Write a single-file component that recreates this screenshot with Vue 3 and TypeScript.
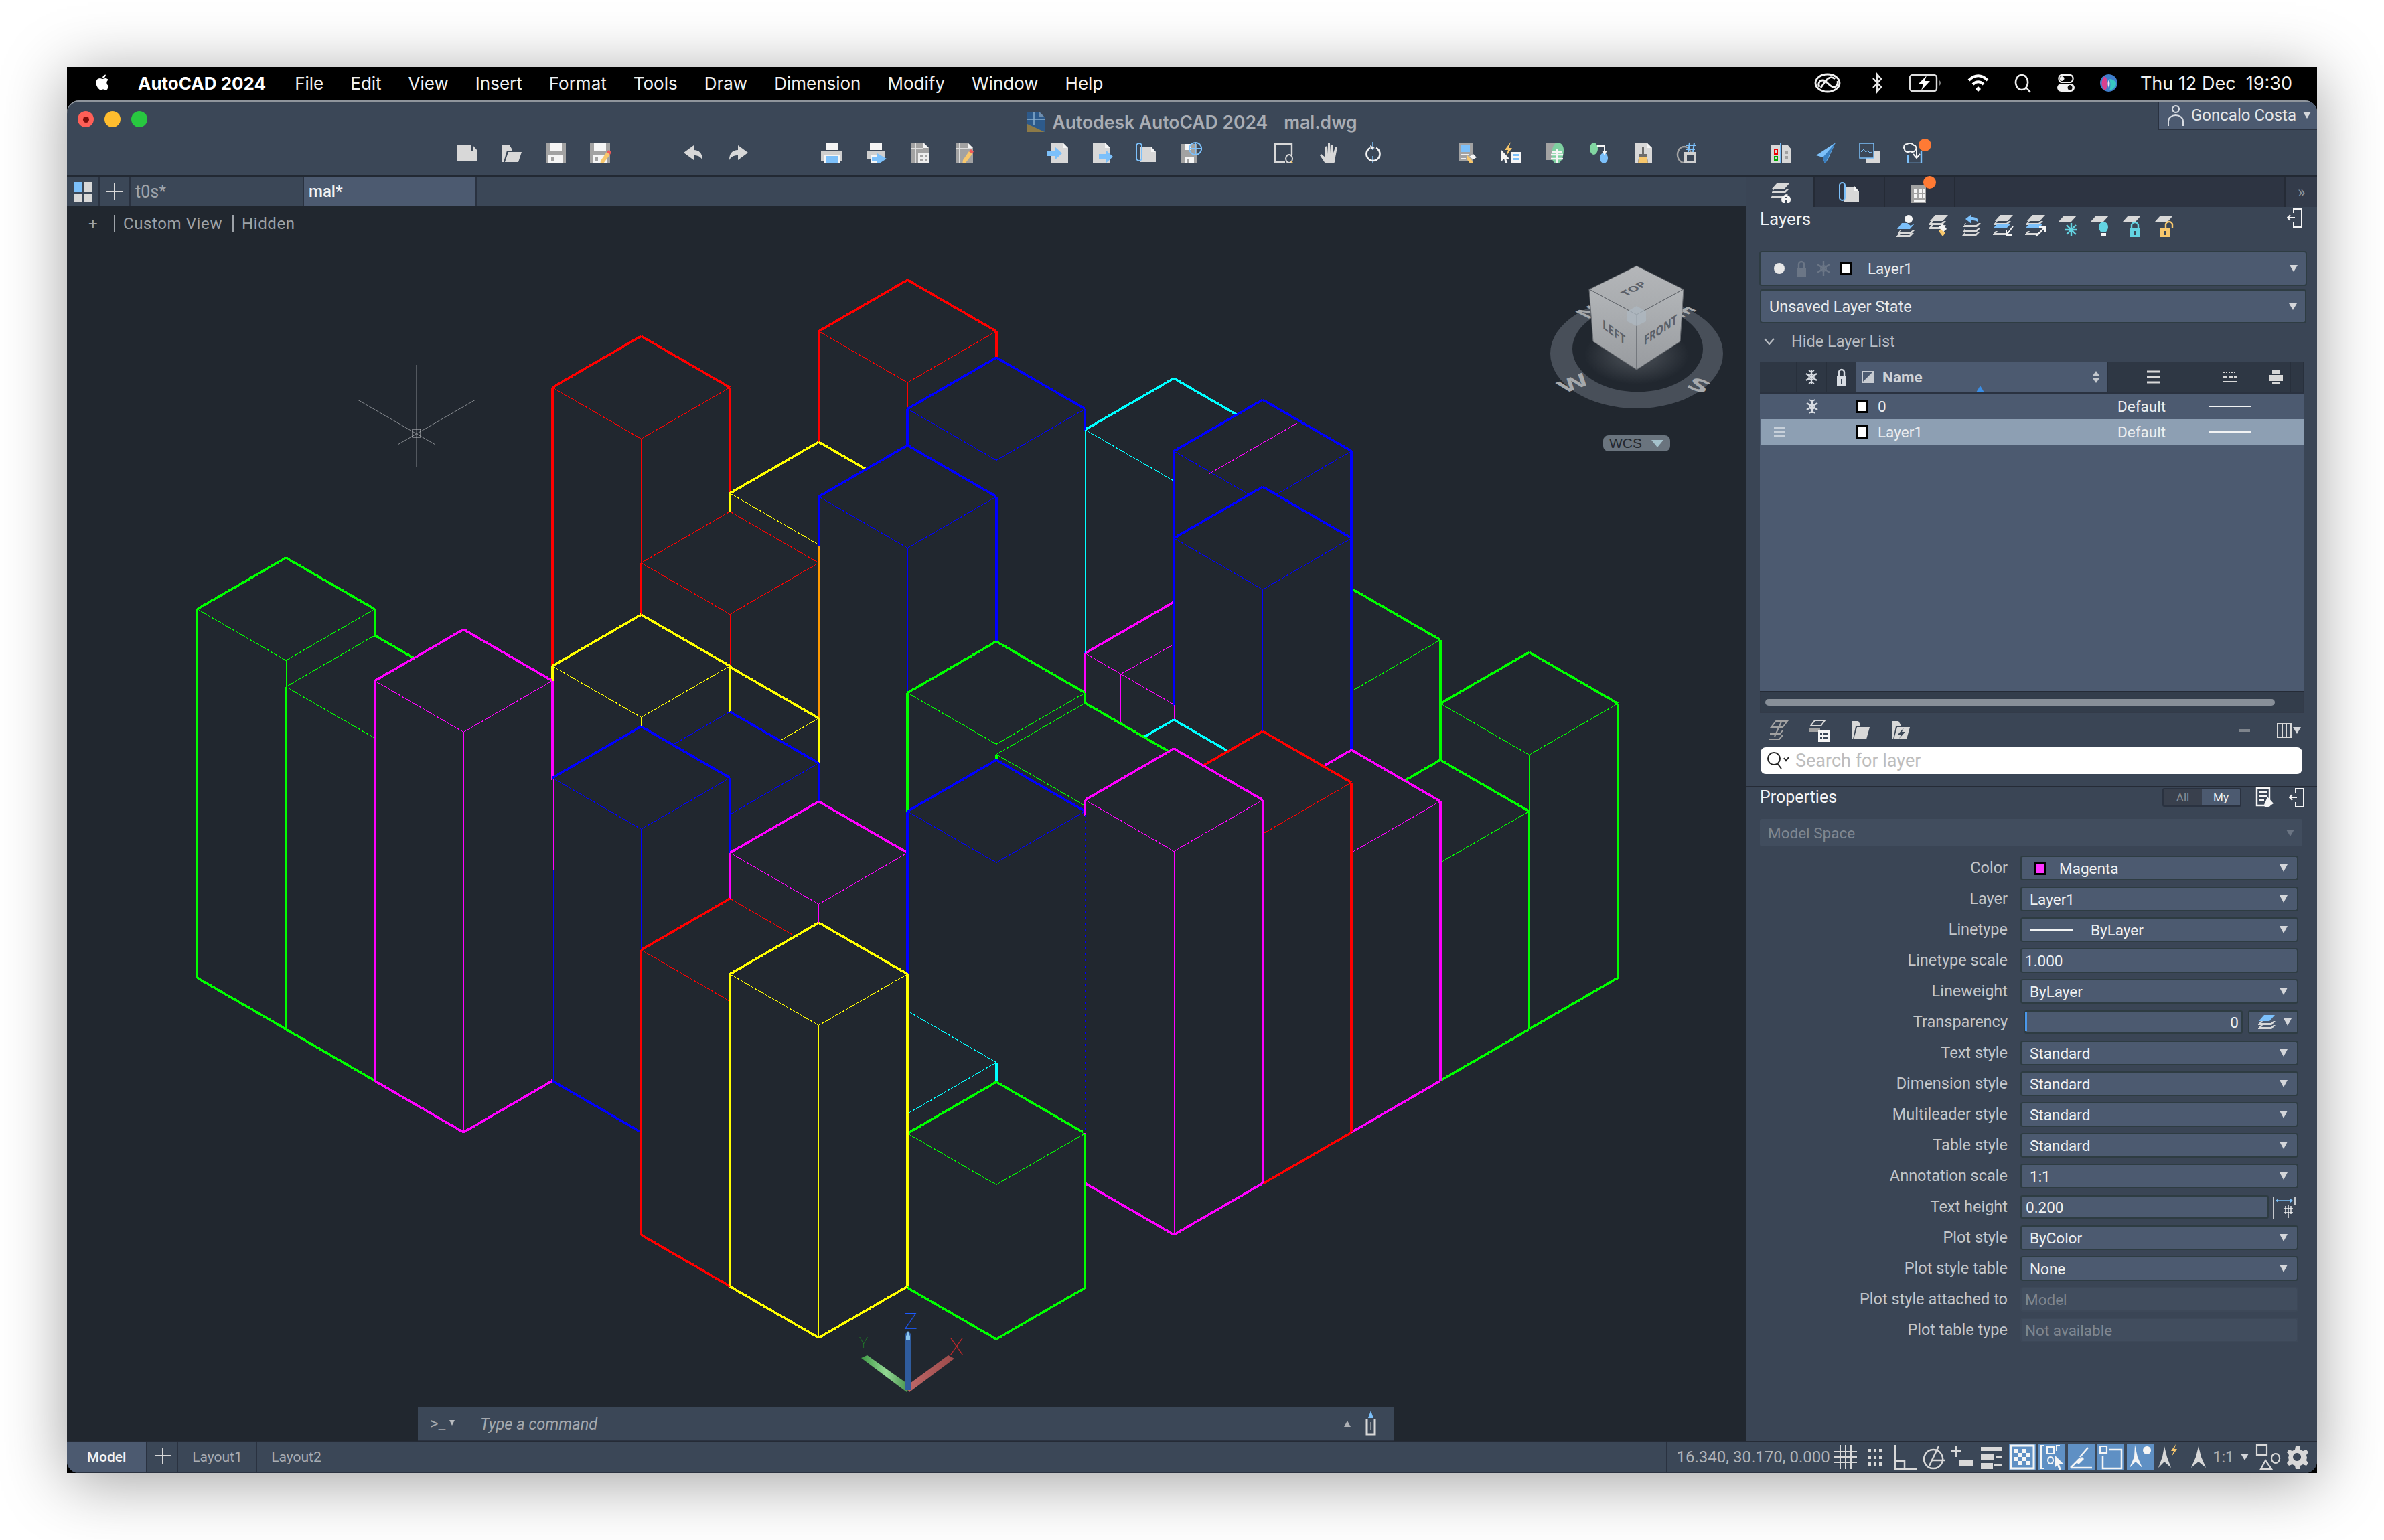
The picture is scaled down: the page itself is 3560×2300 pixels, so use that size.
<template>
  <div class="window">
    <div class="menubar">
      <Ico n="apple" :w="30" :h="34" class="apple" />
      <span class="app-name">AutoCAD 2024</span>
      <span v-for="m in menus" :key="m" class="menu-item">{{ m }}</span>
      <div class="tray">
        <Ico n="cc" :w="40" :h="30" />
        <Ico n="bt" :w="20" :h="32" class="bt" />
        <Ico n="batt" :w="52" :h="30" />
        <Ico n="wifi" :w="34" :h="28" />
        <Ico n="search" :w="28" :h="30" />
        <Ico n="ctrl" :w="28" :h="30" />
        <Ico n="siri" :w="28" :h="30" />
        <span class="clock">Thu 12 Dec&nbsp; 19:30</span>
      </div>
    </div>

    <div class="app">
      <div class="titlebar">
        <div class="title-top">
          <div class="lights">
            <i class="light red"><b></b></i>
            <i class="light yellow"></i>
            <i class="light green"></i>
          </div>
          <div class="title">
            <Ico n="dwg" :w="28" :h="32" />
            <span>Autodesk AutoCAD 2024</span>
            <span class="title-file">mal.dwg</span>
          </div>
          <div class="user">
            <Ico n="person" :w="26" :h="34" />
            <span>Goncalo Costa</span>
            <i class="caret"></i>
          </div>
        </div>
        <div class="tools">
          <div v-for="(g, i) in toolGroups" :key="i" class="tool-group">
            <Ico v-for="t in g" :key="t" :n="t" />
            <i v-if="i === toolGroups.length - 1" class="badge tool-badge"></i>
          </div>
        </div>
      </div>

      <div class="body">
        <div class="left">
          <div class="docbar">
            <div class="doc-btn first"><Ico n="start" :w="30" :h="30" /></div>
            <div class="doc-btn plus"><Ico n="plus" :w="26" :h="26" /></div>
            <div class="doc-tab">t0s*</div>
            <div class="doc-tab active">mal*</div>
          </div>

          <div class="viewport">
            <svg class="scene" viewBox="100 308 2507 1844">
              <path
                v-for="(p, i) in scene"
                :key="i"
                :d="p.d"
                :fill="p.fill ?? 'none'"
                :stroke="p.stroke ?? 'none'"
                :stroke-width="p.width ?? 1"
                :stroke-dasharray="p.dash"
                stroke-linejoin="miter"
                shape-rendering="crispEdges"
              />
              <g stroke="#878b90" stroke-width="1" fill="none">
                <path d="M622 545V698M534 597L650 664M710 597L594 664" />
                <rect x="616" y="641" width="12" height="12" stroke="#c4c6c9" />
              </g>
              <!-- ucs -->
              <defs>
                <linearGradient id="ug" x1="0" y1="0" x2="1" y2="0">
                  <stop offset="0" stop-color="#3f9a45" />
                  <stop offset="0.5" stop-color="#93d894" />
                  <stop offset="1" stop-color="#3f8a45" />
                </linearGradient>
                <linearGradient id="ur" x1="0" y1="0" x2="1" y2="0">
                  <stop offset="0" stop-color="#c06a6a" />
                  <stop offset="1" stop-color="#9c4a4a" />
                </linearGradient>
              </defs>
              <path d="M1286 2028L1295 2024L1360 2070L1354 2079Z" fill="url(#ug)" />
              <path d="M1416 2024L1425 2029L1358 2079L1352 2071Z" fill="url(#ur)" />
              <path d="M1352 1992L1356 1988L1360 1992V2076H1352Z" fill="#2f5c9e" />
              <path d="M1353 1996L1356 1988L1359 1996V2002H1353Z" fill="#8cc6ee" />
              <text class="axis" x="1350" y="1985" fill="#1b5cff">Z</text>
              <text class="axis small" x="1283" y="2013" fill="#1f9b23">Y</text>
              <text class="axis" x="1418" y="2023" fill="#e22828">X</text>
            </svg>

            <div class="vp-label">
              <span class="vp-plus">+</span>
              <span class="vp-item">Custom View</span>
              <span class="vp-item">Hidden</span>
            </div>

            <svg class="cube" viewBox="0 0 400 360" width="400" height="360">
              <defs>
                <radialGradient id="glow" cx="0.5" cy="0.5" r="0.5">
                  <stop offset="0.4" stop-color="#7d8288" stop-opacity="0.3" />
                  <stop offset="1" stop-color="#7d8288" stop-opacity="0" />
                </radialGradient>
                <linearGradient id="faceL" x1="0" y1="0" x2="0" y2="1">
                  <stop offset="0" stop-color="#b2b5b8" />
                  <stop offset="1" stop-color="#989b9f" />
                </linearGradient>
                <linearGradient id="faceT" x1="0" y1="0" x2="0" y2="1">
                  <stop offset="0" stop-color="#b4b6b9" />
                  <stop offset="1" stop-color="#a7aaad" />
                </linearGradient>
              </defs>
              <path
                fill-rule="evenodd"
                fill="#484f59"
                d="M95 188a129 82 0 1 0 258 0a129 82 0 1 0 -258 0ZM128 181a97 64 0 1 0 195 0a97 64 0 1 0 -195 0Z"
              />
              <text class="compass" transform="matrix(1 -0.45 0.9 0.45 150 137)">N</text>
              <text class="compass" transform="matrix(1 0.45 -0.9 0.45 277 127)">E</text>
              <text class="compass" transform="matrix(1.3 -0.5 0.6 0.7 116 248)">W</text>
              <text class="compass" transform="matrix(1.6 0.6 -0.5 0.7 297 238)">S</text>
              <ellipse cx="224" cy="190" rx="78" ry="44" fill="url(#glow)" />
              <path d="M224 57L294 92L224 130L153 92Z" fill="url(#faceT)" stroke="#4a4f55" />
              <path d="M153 92L224 130V212L159 170Z" fill="url(#faceL)" stroke="#666a70" />
              <path d="M294 92L224 130V212L289 170Z" fill="url(#faceL)" stroke="#666a70" />
              <path d="M224 117L238 125V140L224 147L210 140V125Z" fill="#aeb8c2" opacity="0.75" />
              <text class="face" transform="matrix(0.86 -0.47 0.72 0.42 208 103)">TOP</text>
              <text class="face" transform="matrix(0.8 0.6 0 1 173 150)">LEFT</text>
              <text class="face" transform="matrix(0.76 -0.52 0 1 235 176)">FRONT</text>
            </svg>
            <div class="wcs">WCS <i class="wcs-caret"></i></div>

            <div class="cmdline">
              <span class="prompt">&gt;_ <i class="tiny-caret"></i></span>
              <span class="cmd-hint">Type a command</span>
              <i class="up-caret"></i>
              <Ico n="cmdup" :w="28" :h="38" />
            </div>
          </div>
        </div>

        <aside class="panel">
          <div class="panel-tabs">
            <div class="ptab active"><Ico n="ptabLayers" /></div>
            <div class="ptab"><Ico n="attach" /></div>
            <div class="ptab badged">
              <Ico n="ptabSheet" />
              <i class="badge"></i>
            </div>
            <div class="ptab-fill"></div>
            <div class="ptab-more">»</div>
          </div>

          <div class="layers-head">
            <span class="panel-title">Layers</span>
            <div class="layers-tools">
              <Ico v-for="t in layerTools" :key="t" :n="t" :w="32" :h="34" />
            </div>
            <Ico n="dock" :w="24" :h="30" class="dock" />
          </div>

          <div class="combo layer-combo">
            <i class="dot"></i>
            <Ico n="lockDim" :w="18" :h="24" />
            <Ico n="snowDim" :w="20" :h="24" />
            <i class="swatch"></i>
            <span class="combo-text">Layer1</span>
            <i class="caret"></i>
          </div>
          <div class="combo state-combo">
            <span>Unsaved Layer State</span>
            <i class="caret"></i>
          </div>

          <div class="hide-row">
            <svg width="18" height="12" viewBox="0 0 18 12"><path d="M2 2l7 8 7-8" fill="none" stroke="#b8bcc2" stroke-width="2.2" /></svg>
            <span>Hide Layer List</span>
          </div>

          <div class="layer-table">
            <div class="thead">
              <div class="th c-status"></div>
              <div class="th c-frz"><Ico n="snow" :w="22" :h="24" /></div>
              <div class="th c-lock"><Ico n="lock" :w="18" :h="26" /></div>
              <div class="th c-name">
                <svg width="18" height="18" viewBox="0 0 18 18"><path d="M1 1h16v16H1z" fill="none" stroke="#c8ccd2" stroke-width="2" /><path d="M1 17L17 1v16z" fill="#c8ccd2" /></svg>
                <b>Name</b>
                <span class="sort"><i></i><i class="down"></i></span>
                <i class="sort-mark"></i>
              </div>
              <div class="th c-lw"><Ico n="lines" :w="22" :h="20" /></div>
              <div class="th c-lt"><Ico n="dash" :w="22" :h="20" /></div>
              <div class="th c-pr"><Ico n="printSmall" :w="22" :h="22" /></div>
              <div class="th c-end"></div>
            </div>
            <div class="tbody">
              <div v-for="r in layerRows" :key="r.name" class="tr" :class="{ sel: r.sel }">
                <div class="c-status td">
                  <svg v-if="r.sel" width="20" height="16" viewBox="0 0 20 16"><path d="M2 2h16M2 8h16M2 14h16" stroke="#c7d0da" stroke-width="2" /></svg>
                </div>
                <div class="c-frz td"><Ico v-if="!r.sel" n="snow" :w="22" :h="24" /></div>
                <div class="c-lock td"></div>
                <div class="c-name td">
                  <i class="swatch"></i>
                  <span class="row-name">{{ r.name }}</span>
                </div>
                <div class="c-lw td">Default</div>
                <div class="c-lt td"><i class="lt-line"></i></div>
              </div>
            </div>
            <div class="hscroll"><i></i></div>
          </div>

          <div class="layer-actions">
            <Ico v-for="t in layerActions" :key="t" :n="t" :w="34" :h="34" />
            <span class="grow"></span>
            <i class="minus"></i>
            <Ico n="cols" :w="22" :h="22" />
            <i class="caret small"></i>
          </div>

          <div class="search">
            <svg width="38" height="28" viewBox="0 0 38 28"><circle cx="12" cy="11" r="9" fill="none" stroke="#222" stroke-width="2" /><path d="M17 18l6 8M27 10l3 4 4-5" fill="none" stroke="#222" stroke-width="2" /></svg>
            <span>Search for layer</span>
          </div>

          <div class="divider"></div>

          <div class="props-head">
            <span class="panel-title">Properties</span>
            <span class="grow"></span>
            <div class="seg">
              <span class="seg-all">All</span>
              <span class="seg-my">My</span>
            </div>
            <Ico n="report" :w="30" :h="30" class="report" />
            <Ico n="dock" :w="24" :h="30" />
          </div>

          <div class="space-combo">
            <span>Model Space</span>
            <i class="caret"></i>
          </div>

          <div class="prop-list">
            <div v-for="p in props" :key="p.label" class="prop">
              <label>{{ p.label }}</label>
              <div class="prop-val" :class="p.kind">
                <template v-if="p.kind === 'color'">
                  <i class="swatch magenta"></i>
                  <span class="indent">{{ p.value }}</span>
                  <i class="caret"></i>
                </template>
                <template v-else-if="p.kind === 'linetype'">
                  <i class="lt-line short"></i>
                  <span class="indent wide">{{ p.value }}</span>
                  <i class="caret"></i>
                </template>
                <template v-else-if="p.kind === 'transp'">
                  <div class="slider">
                    <i class="thumb"></i>
                    <i class="tick"></i>
                    <span>{{ p.value }}</span>
                  </div>
                  <div class="side-btn">
                    <Ico n="lay1Small" :w="28" :h="26" />
                    <i class="caret"></i>
                  </div>
                </template>
                <template v-else-if="p.kind === 'pick'">
                  <div class="inputbox">{{ p.value }}</div>
                  <Ico n="pick" :w="36" :h="36" />
                </template>
                <template v-else>
                  <span>{{ p.value }}</span>
                  <i v-if="p.kind === 'select'" class="caret"></i>
                </template>
              </div>
            </div>
          </div>
        </aside>
      </div>

      <div class="statusbar">
        <div class="stab model">Model</div>
        <div class="stab add"><Ico n="plus" :w="26" :h="30" /></div>
        <div class="stab">Layout1</div>
        <div class="stab">Layout2</div>
        <span class="grow"></span>
        <div class="coords">16.340, 30.170, 0.000</div>
        <div class="status-icons">
          <div v-for="s in statusIcons" :key="s.n" class="sico" :class="{ on: s.on }">
            <Ico :n="s.n" :w="40" :h="40" />
          </div>
          <span class="anno">1:1</span>
          <i class="caret"></i>
          <div class="sico last"><Ico n="units" :w="40" :h="40" /></div>
          <div class="sico"><Ico n="gear" :w="40" :h="40" /></div>
        </div>
      </div>
    </div>
  </div>
</template>

<script setup lang="ts">
import { h } from 'vue';

type P = [string, string, number?];

const GRAY = '#d8d8d8';
const MID = '#a2a2a2';
const BLUE = '#7cc0fa';
const ORANGE = '#f7c76c';
const WHITE = '#f5f5f5';
const DARK = '#3b4757';

const plate = (y: number, x = 0) => `M${11 + x} ${y}h19l-8 9H${3 + x}z`;
const plateLine = (y: number, x = 0) => `M${5 + x} ${y}l-4 5v1h20l6-6h-3l-4 3H6l2-3z`;

const pencil = (x: number, y: number): P[] => [
  [ORANGE, `M${x + 9} ${y}l5 4-10 13-5 3 1-7z`],
  ['#ef5b5b', `M${x + 9} ${y}l3-3 4 3-2 4z`],
];

const floppy: P[] = [
  [MID, 'M2 1h30v30H2z'],
  [WHITE, 'M8 1h18v12H8z'],
  [WHITE, 'M6 19h22v12H6z'],
  [MID, 'M10 22h4v7h-4z'],
];

const I: Record<string, P[]> = {
  apple: [['#fff', 'M22.2 26.5c-1.2 1.2-2.6 1-3.9.4-1.4-.6-2.7-.6-4.1 0-1.8.8-2.8.6-3.9-.4C3.3 20 4.2 10.300 11.200 10c1.700.1 2.900.9 3.900 1 1.500-.3 2.900-1.200 4.500-1.100 1.900.2 3.400.9 4.300 2.300-3.900 2.400-3 7.600.6 9-.7 1.900-1.700 3.800-2.300 5.300zM15.100 9.900c-.2-2.800 2.100-5.200 4.700-5.400.4 3.300-3 5.700-4.700 5.400z']],
  cc: [
    ['#f0f0f0', 'M20 2c10 0 18 6 18 13s-8 13-18 13S2 22 2 15 10 2 20 2z', 2.8],
    ['#f0f0f0', 'M8 21c-3-5 0-10 5-10 6 0 10 10 16 10 5 0 7-5 6-9M31 9c-4-4-9-3-14 3l-7 10', 2.8],
  ],
  bt: [['#e8e8e8', 'M4 9l12 13-6 7V3l6 7L4 23', 2.4]],
  batt: [['#ddd', 'M7 3h32a4 4 0 0 1 4 4v16a4 4 0 0 1-4 4H7a4 4 0 0 1-4-4V7a4 4 0 0 1 4-4z', 2.4], ['#fff', 'M28 4L15 17h8l-3 9 13-14h-8z'], ['#777', 'M46 11v8c2 0 3-2 3-4s-1-4-3-4z']],
  wifi: [['#fff', 'M3 10C12 1 22 1 31 10', 4], ['#fff', 'M9 16c5-5 11-5 16 0', 4], ['#fff', 'M17 19l4 4-4 4-4-4z']],
  search: [['#eee', 'M12 3a9 11 0 1 0 .1 0zM18 21l7 8', 2.6]],
  ctrl: [['#f2f2f2', 'M7 3h14a6 6 0 0 1 0 11H7a6 6 0 0 1 0-11z', 2.2], ['#f2f2f2', 'M8 5a3.500 3.500 0 1 0 .1 0z'], ['#f2f2f2', 'M7 16h14a6 6 0 0 1 0 12H7a6 6 0 0 1 0-12z'], ['#111', 'M20 18a3.500 4 0 1 0 .1 0z']],
  siri: [['#3f7ecb', 'M14 2a13 13 0 1 1-.1 0z'], ['#d8418f', 'M8 5c-6 5-6 15 0 21 6-4 6-16 0-21z'], ['#37c8c0', 'M15 9c4 0 10 3 10 7s-6 10-10 10c2-5 2-12 0-17z'], ['#e8e8f0', 'M14 10c2 4 2 8 0 12-2-4-2-8 0-12z']],
  dwg: [['#2d5a8b', 'M1 1h18l8 8v22H1z'], ['#8d7a47', 'M1 19l26 12H1z'], ['#6f8eae', 'M19 1l8 8h-8z'], ['#8bb0cf', 'M1 12h26M11 1v20', 1.5]],
  person: [['#d8dce2', 'M13 3a5 5 0 1 0 .1 0zM2 33V26c0-5 5-9 11-9s11 4 11 9v7', 2]],
  start: [[BLUE, 'M1 1h13v15H1z'], [GRAY, 'M16 1h13v15H16zM1 18h13v12H1zM16 18h13v12H16z']],
  plus: [[GRAY, 'M13 1v24M1 13h24', 2]],
  new: [[GRAY, 'M2 5h21v9h9v15H2z'], [GRAY, 'M25 5l7 8h-7z']],
  open: [[GRAY, 'M3 5h11l3 5v3h-7L5 30H3z'], [GRAY, 'M12 15h20l-5 15H7z']],
  save: floppy,
  saveas: [...floppy, ...pencil(18, 15)],
  undo: [[GRAY, 'M17 5L2 16l15 11v-7c5 0 10 1 13 7 0-10-5-15-13-15z']],
  redo: [[GRAY, 'M17 5l15 11-15 11v-7c-5 0-10 1-13 7 0-10 5-15 13-15z']],
  print: [[WHITE, 'M8 1h18v11H8z'], ['#cfcfcf', 'M1 14h32v15H1z'], [WHITE, 'M5 19h24v13H5z'], [BLUE, 'M8 21h18v10H8z']],
  plot: [[WHITE, 'M8 1h18v11H8z'], ['#cfcfcf', 'M3 14h28v11H3z'], [WHITE, 'M9 20h14v12H9z'], [BLUE, 'M19 17l14 8-14 9v-5h-8v-7h8z']],
  sheet: [[MID, 'M4 1h18l8 8v22H4z'], [WHITE, 'M22 1l8 8h-8z'], ['#ddd', 'M10 1v30M4 10h18', 2], ['#eee', 'M14 16h16v16H14z'], [MID, 'M17 19h4v3h-4zM24 19h4v3h-4zM17 25h4v3h-4zM24 25h4v3h-4z']],
  sheetEdit: [[MID, 'M4 1h18l8 8v22H4z'], [WHITE, 'M22 1l8 8h-8z'], ['#ddd', 'M10 1v30M4 10h24', 2], ...pencil(15, 14)],
  import: [[GRAY, 'M6 1h18l8 8v23H6z'], [WHITE, 'M24 1l8 8h-8z'], [BLUE, 'M12 7l11 10-11 10v-6H1v-8h11z']],
  export: [[GRAY, 'M3 1h18l8 8v23H3z'], [WHITE, 'M21 1l8 8h-8z'], [BLUE, 'M22 12l11 10-11 10v-6H12v-8h10z']],
  attach: [[GRAY, 'M8 8h16l7 7v15H8z'], [WHITE, 'M24 7l7 8h-7z'], [BLUE, 'M10 7v17a4 4 0 0 1-8 0V6a4 4 0 0 1 8 0v15', 2]],
  web: [[MID, 'M3 3h24v29H3z'], [WHITE, 'M8 22h14v10H8z'], [MID, 'M11 25h3v6h-3z'], [WHITE, 'M8 3h10v9H8z'], [BLUE, 'M24 1a9 9 0 1 0 .1 0zM24 1v18M15 10h18', 2]],
  zoomwin: [[GRAY, 'M3 3h25v27H3z', 2.4], [DARK, 'M18 20h16v13H18z'], [GRAY, 'M24 19a5 6 0 1 0 .1 0z', 2], [ORANGE, 'M27 29l4 5', 2]],
  hand: [[GRAY, 'M12 32L4 20l2-2 6 5V7l3-1 1 12V2h3l1 15 1-13h3l-1 15 4-11h3l-3 15-1 7-4 6z']],
  orbit: [[BLUE, 'M17 0v12M17 21v11', 1.5], [WHITE, 'M22 9a10 10 0 1 1-9 0', 2.6], [WHITE, 'M13 5l1 6 6-2z']],
  props: [[MID, 'M5 1h22v28H5z'], [BLUE, 'M8 4h14v11H8z'], ['#eee', 'M8 19h12M8 25h8', 2], [ORANGE, 'M18 20l6 6 4 7-6-1-5-7z'], [WHITE, 'M21 22l6-4 5 5-5 3z']],
  qprops: [[ORANGE, 'M17 0l-9 12h5l-3 9 9-12h-5z'], [WHITE, 'M2 11l14 15-6-1 3 8-4-1-2-7-5 5z'], [WHITE, 'M18 15h15v17H18z'], [BLUE, 'M21 18h9v3h-9zM21 24h9v3h-9z']],
  match: [[MID, 'M4 1h20v26H4z'], ['#7ed0a0', 'M21 1c6 0 9 5 9 11 0 9-3 19-9 20-8 2-11-12-8-21 1-5 4-10 8-10z'], [WHITE, 'M20 10v22M11 19h18M11 25h18M13 15h14', 2.4]],
  qselect: [['#82d6a2', 'M9 1c3 0 6 4 6 9s-3 9-6 9-6-4-6-9 3-9 6-9z'], [BLUE, 'M24 16c3 0 6 4 6 8s-3 8-6 8-6-4-6-8 3-8 6-8z'], [WHITE, 'M14 6h11v9', 2], [WHITE, 'M21 13h8l-4 7z']],
  purge: [[GRAY, 'M4 1h18l8 8v22H4z'], [WHITE, 'M22 1l8 8h-8z'], ['#6d6d6d', 'M15 7h3v12h-3z'], ['#6d6d6d', 'M11 18h11l2 13H9z'], [ORANGE, 'M11 22h11l2 10H9z']],
  qcalc: [[MID, 'M12 7a10 12 0 1 0 .1 0z', 2.4], [BLUE, 'M20 1l-2 14M27 1l-2 14M15 5h14M14 11h14', 2], ['#d0d0d0', 'M12 15h18v17H12z'], [DARK, 'M16 19h10v9H16z']],
  compare: [[GRAY, 'M2 5h13v27H2zM18 5h9l5 6v21H18z'], ['#e00', 'M6 10h6v9H6z'], [GRAY, 'M8 12h2v5H8z'], ['#0a0', 'M6 21h6v7H6z'], [GRAY, 'M8 23h2v3H8z'], [MID, 'M22 13h5v5h-5zM22 21h5v5h-5z'], [BLUE, 'M16 1v32', 2]],
  share: [[BLUE, 'M32 1L3 20l10 3 3 10 5-8z'], ['#3a7fc0', 'M32 1L13 23l3 10z']],
  trace: [[GRAY, 'M11 14h21v18H11z'], [DARK, 'M2 2h21v22H2z'], [BLUE, 'M2 2h21v22H2z', 1.5], [BLUE, 'M4 15l4-4 3 4 3-2 3 3 4-1', 1]],
  cloud: [[WHITE, 'M7 3c-5 0-6 5-4 8 0 4 6 5 8 3 3 2 7 1 8-2 3-2 1-7-2-7-2-3-7-4-10-2z', 2], [BLUE, 'M8 19v13h20V14', 2.4], [WHITE, 'M21 8v15M16 18l5 6 5-6', 2]],
  ptabLayers: [[GRAY, plate(2, 2)], [GRAY, plateLine(11, 4)], [GRAY, plateLine(18, 3)], [WHITE, 'M26 20a7 7 0 1 0 .1 0z'], [DARK, 'M25 23h2v2h-2zM25 27h2v6h-2z']],
  ptabSheet: [[MID, 'M4 5h22v27H4z'], [WHITE, 'M8 12h5v5H8zM15 12h5v5h-5zM8 19h5v5H8zM15 19h5v5h-5zM22 12h3v5h-3zM22 19h3v5h-3z'], [WHITE, 'M8 27h17v3H8z']],
  lay1: [[WHITE, 'M19 1a6 6 0 1 0 .1 0z'], [BLUE, 'M9 13h8l5 4 6-3-7 8H2z'], [GRAY, plateLine(23, 2)], [GRAY, plateLine(28, 0)]],
  lay2: [[GRAY, plate(1, 0)], [GRAY, plateLine(10, 0)], [GRAY, plateLine(16, 0)], [ORANGE, 'M20 21l6 7-4 5-6-8z'], [WHITE, 'M16 19l6-5 6 8-5 4z']],
  lay3: [[BLUE, 'M8 7L17 0v4c6 0 11 2 10 8-3-3-6-3-10-3v5z'], [GRAY, plateLine(13, 4)], [GRAY, plateLine(20, 4)], [GRAY, plateLine(27, 2)]],
  lay4: [[GRAY, plate(1, 1)], [GRAY, plateLine(10, 1)], [BLUE, 'M7 15h20l-6 6H1z'], [GRAY, plateLine(25, 0)], [WHITE, 'M31 18L21 31M21 23v8h8', 2]],
  lay5: [[GRAY, plate(1, 1)], [GRAY, plateLine(10, 1)], [BLUE, 'M7 15h20l-6 6H1z'], [GRAY, plateLine(25, 0)], [WHITE, 'M17 33l13-13M22 19h9v8', 2]],
  lay6: [[GRAY, plate(2, 0)], ['#63d3e2', 'M22 13v20M13 23h18M15 16l14 14M29 16L15 30', 2.4]],
  lay7: [[GRAY, plate(2, 0)], ['#63d3e2', 'M22 11a7 8 0 0 1 7 8c0 4-3 6-3 8h-8c0-2-3-4-3-8a7 8 0 0 1 7-8z'], [WHITE, 'M18 28h8v5h-8z']],
  lay8: [[GRAY, plate(2, 0)], ['#63d3e2', 'M13 21h16v13H13z'], ['#63d3e2', 'M16 21v-4a5 5 0 0 1 10 0v4', 2.4], [DARK, 'M20 25h2v6h-2z']],
  lay9: [[GRAY, plate(2, 0)], [ORANGE, 'M10 21h15v13H10z'], [ORANGE, 'M19 21v-5a5 5 0 0 1 10 0v4', 2.4], [DARK, 'M17 25h2v6h-2z']],
  lay1Small: [[BLUE, 'M10 2h16l-8 9H2z'], [GRAY, plateLine(11, 0)], [GRAY, plateLine(17, 0)]],
  dock: [[WHITE, 'M10 8V2h12v27H10v-7', 2], [WHITE, 'M1 15h11M5 11l-4 4 4 4', 2]],
  lockDim: [['#6b7686', 'M2 11h14v13H2z'], ['#6b7686', 'M5 11V6a4 4 0 0 1 8 0v5', 2.4]],
  snowDim: [['#6b7686', 'M10 1v22M1 6l18 12M19 6L1 18', 2.4], ['#6b7686', 'M10 8a4 4 0 1 0 .1 0z', 2]],
  snow: [['#d8dce2', 'M11 2v20M3 7l16 10M19 7L3 17', 2.4], ['#d8dce2', 'M11 8a4 4 0 1 0 .1 0zM7 2l4 3 4-3M7 22l4-3 4 3', 1.6]],
  lock: [['#d8dce2', 'M2 12h14v14H2z'], ['#d8dce2', 'M5 12V6a4 4 0 0 1 8 0v6', 2.4], ['#3b4757', 'M8 16h2v7H8z']],
  lines: [[GRAY, 'M1 2h20M1 10h20M1 18h20', 3]],
  dash: [[GRAY, 'M1 3h2M5 3h2M9 3h2M13 3h2M17 3h2M21 3h1M1 10h6M9 10h6M17 10h5M1 17h21', 2]],
  printSmall: [[GRAY, 'M5 1h12v6H5zM1 8h20v9H1zM5 19h12v2H5z']],
  layerAct1: [[MID, 'M12 3h17l-7 9H5z', 2], [MID, 'M3 22h15l4-5M2 30h15l5-6', 2], [MID, 'M20 4L10 26', 2]],
  layerAct2: [[GRAY, 'M10 2h15l-6 8H4z', 2], [MID, 'M2 14h16v5H2z'], [MID, 'M6 21h8'], [WHITE, 'M15 16h18v18H15z'], [DARK, 'M18 20h3v3h-3zM23 20h7v3h-7zM18 26h3v3h-3zM23 26h7v3h-7z']],
  layerOpen: [[GRAY, 'M5 3h10l3 5v3h-7L7 30H5z'], [GRAY, 'M13 12h19l-5 18H8z']],
  layerBolt: [[GRAY, 'M5 3h10l3 5v3h-7L7 30H5z'], [GRAY, 'M13 12h19l-5 18H8z'], [DARK, 'M23 13l-9 10h5l-3 6 9-10h-5z']],
  cols: [[GRAY, 'M1 1h20v20H1zM8 1v20M14 1v20', 2]],
  report: [[WHITE, 'M3 1h19v26H3z', 2.4], [WHITE, 'M7 7h12M7 13h12M7 19h7', 2.4], [WHITE, 'M19 14l9 10-9 6-4-6z'], [WHITE, 'M14 24l1 6 5-1z']],
  pick: [[WHITE, 'M2 2v33M34 2v12', 1.5], [BLUE, 'M6 8h24', 1.5], [BLUE, 'M9 5L5 8l4 3zM27 5l4 3-4 3z'], [WHITE, 'M24 14v20M17 20h14M17 26h14M20 16v12M28 16v12', 1.4]],
  cmdup: [[GRAY, 'M8 13v22h12V13', 3], [GRAY, 'M14 17v12', 1], [BLUE, 'M14 0l4 11h-8z']],
  grid: [[GRAY, 'M12 2v36M20 2v36M28 2v36M3 12h34M3 20h34M3 28h34', 2]],
  dots: [[GRAY, 'M10 8h4v5h-4zM18 8h4v5h-4zM26 8h4v5h-4zM10 18h4v5h-4zM18 18h4v5h-4zM26 18h4v5h-4zM10 28h4v5h-4zM18 28h4v5h-4zM26 28h4v5h-4z']],
  ortho: [[GRAY, 'M6 2v36h32', 2.5], [GRAY, 'M6 26h14v12', 2.5]],
  polar: [[GRAY, 'M19 9a14 14 0 1 0 .1 0z', 2.5], [GRAY, 'M13 33L27 4M16 25h20', 2.5]],
  dyn: [[GRAY, 'M9 4v16M2 11h14', 2.5], [GRAY, 'M14 24h21v9H14z']],
  lwt: [[GRAY, 'M2 5h32v6H2z'], [GRAY, 'M2 16h20v9H2zM24 18h10v3H24z'], [GRAY, 'M2 29h18v9H2zM22 30h12v3H22z']],
  transp: [[WHITE, 'M3 3h34v34H3z', 3], [WHITE, 'M8 8h6v6H8zM20 8h6v6h-6zM14 14h6v6h-6zM26 14h6v6h-6zM8 20h6v6H8zM20 20h6v6h-6zM14 26h6v6h-6zM26 26h6v6h-6z']],
  selcyc: [[WHITE, 'M9 3H4v34h5M32 3h-5v8', 2], [WHITE, 'M13 5h10v10H13z', 2], [WHITE, 'M18 20a4 5 0 1 0 .1 0z', 2], [WHITE, 'M24 17l13 13-6 1 3 8-3 1-3-8-4 4z']],
  osnap: [[WHITE, 'M4 36h32', 2.5], [WHITE, 'M4 36l14-14M18 20L30 6', 2.5], [WHITE, 'M13 28l8-8 3 3-8 8z']],
  otrack: [[WHITE, 'M4 4h10v10H4z', 2.2], [WHITE, 'M18 9h18v28H8V18', 2.5]],
  annoOn: [[WHITE, 'M12 2l4 18 7 16-10-9-9 9 7-16z'], [WHITE, 'M30 4a6 6 0 1 0 .1 0z']],
  annoAuto: [[GRAY, 'M12 4l4 16 6 16-10-9-9 9 6-16z'], [ORANGE, 'M29 1l-7 10h4l-3 8 8-11h-4z']],
  annoPlain: [[GRAY, 'M19 4l4 16 7 16-11-9-11 9 7-16z']],
  units: [[GRAY, 'M4 2h15v15H4z', 2.2], [GRAY, 'M32 15a6 7 0 1 0 .1 0z', 2.2], [GRAY, 'M17 25l9 13H10z', 2.2]],
  gear: [[GRAY, 'M20 3l4 1 1 5 4 2 5-2 3 4-3 4 1 4-1 4 3 4-3 4-5-2-4 2-1 5h-6l-1-5-4-2-5 2-3-4 3-4-1-4 1-4-3-4 3-4 5 2 4-2 1-5zM20 14a6 6 0 1 0 .1 0z']],
};

const Ico = (props: { n: string; w?: number; h?: number }) => {
  const w = props.w ?? 34;
  const ht = props.h ?? 32;
  return h(
    'svg',
    { width: w, height: ht, viewBox: `0 0 ${w} ${ht}`, style: 'flex:none;display:block' },
    (I[props.n] ?? []).map(([c, d, sw]) =>
      sw === undefined
        ? h('path', { d, fill: c, 'fill-rule': 'evenodd' })
        : h('path', { d, fill: 'none', stroke: c, 'stroke-width': sw }),
    ),
  );
};

const menus = ['File', 'Edit', 'View', 'Insert', 'Format', 'Tools', 'Draw', 'Dimension', 'Modify', 'Window', 'Help'];

const toolGroups = [
  ['new', 'open', 'save', 'saveas'],
  ['undo', 'redo'],
  ['print', 'plot', 'sheet', 'sheetEdit'],
  ['import', 'export', 'attach', 'web'],
  ['zoomwin', 'hand', 'orbit'],
  ['props', 'qprops', 'match', 'qselect', 'purge', 'qcalc'],
  ['compare', 'share', 'trace', 'cloud'],
];

const layerTools = ['lay1', 'lay2', 'lay3', 'lay4', 'lay5', 'lay6', 'lay7', 'lay8', 'lay9'];
const layerActions = ['layerAct1', 'layerAct2', 'layerOpen', 'layerBolt'];

const layerRows = [
  { name: '0', sel: false },
  { name: 'Layer1', sel: true },
];

const props = [
  { label: 'Color', value: 'Magenta', kind: 'color' },
  { label: 'Layer', value: 'Layer1', kind: 'select' },
  { label: 'Linetype', value: 'ByLayer', kind: 'linetype' },
  { label: 'Linetype scale', value: '1.000', kind: 'input' },
  { label: 'Lineweight', value: 'ByLayer', kind: 'select' },
  { label: 'Transparency', value: '0', kind: 'transp' },
  { label: 'Text style', value: 'Standard', kind: 'select' },
  { label: 'Dimension style', value: 'Standard', kind: 'select' },
  { label: 'Multileader style', value: 'Standard', kind: 'select' },
  { label: 'Table style', value: 'Standard', kind: 'select' },
  { label: 'Annotation scale', value: '1:1', kind: 'select' },
  { label: 'Text height', value: '0.200', kind: 'pick' },
  { label: 'Plot style', value: 'ByColor', kind: 'select' },
  { label: 'Plot style table', value: 'None', kind: 'select' },
  { label: 'Plot style attached to', value: 'Model', kind: 'off' },
  { label: 'Plot table type', value: 'Not available', kind: 'off' },
];

const statusIcons = [
  { n: 'grid' },
  { n: 'dots' },
  { n: 'ortho' },
  { n: 'polar' },
  { n: 'dyn' },
  { n: 'lwt' },
  { n: 'transp', on: true },
  { n: 'selcyc', on: true },
  { n: 'osnap', on: true },
  { n: 'otrack', on: true },
  { n: 'annoOn', on: true },
  { n: 'annoAuto' },
  { n: 'annoPlain' },
];

// Scene: isometric columns painted back to front, the way the Hidden visual style shows them.
type Prim = { d: string; fill?: string; stroke?: string; width?: number; dash?: string };

const R = '#ff0000';
const Y = '#ffff00';
const G = '#00ff00';
const C = '#00ffff';
const B = '#0000ff';
const M = '#ff00ff';
const BG = '#21272f';
const DX = 132.6;
const DY = 76.7;
const THICK = 3.5;
const X = (k: number) => 427 + DX * k;

const scene: Prim[] = [];

function seg(a: number[], b: number[], stroke: string, width = THICK, dash?: string) {
  scene.push({ d: `M${a[0]} ${a[1]}L${b[0]} ${b[1]}`, stroke, width, dash });
}

function col(c: string, k: number, top: number, bottom: number, opt: { thin?: string[]; centerDash?: string } = {}) {
  const x = X(k);
  const A = [x, top];
  const Rt = [x + DX, top + DY];
  const Ct = [x, top + 2 * DY];
  const L = [x - DX, top + DY];
  const RB = [x + DX, bottom - DY];
  const Bm = [x, bottom];
  const LB = [x - DX, bottom - DY];
  scene.push({ d: `M${[A, Rt, RB, Bm, LB, L].map((p) => p.join(' ')).join('L')}Z`, fill: BG });
  seg(L, Ct, c, 1);
  seg(Rt, Ct, c, 1);
  seg(Ct, Bm, c, 1, opt.centerDash);
  const edges: Record<string, number[][]> = {
    al: [A, L],
    ar: [A, Rt],
    lv: [L, LB],
    rv: [Rt, RB],
    bl: [LB, Bm],
    br: [RB, Bm],
  };
  Object.keys(edges).forEach((e) => {
    seg(edges[e][0], edges[e][1], c, opt.thin?.includes(e) ? 1 : THICK);
  });
}

function patch(x: number, y1: number, y2: number) {
  seg([x, y1], [x, y2], BG, 7);
}

col(G, 0, 833, 1537);
col(G, 1, 949, 1614, { thin: ['al'] });
col(R, 7, 418, 1100);
col(C, 10, 565, 1150);
col(B, 8, 534, 1200);
col(R, 4, 502, 1300);
col(Y, 6, 660, 1300);
col(R, 5, 764, 1400, { thin: ['al', 'ar'] });
col(B, 7, 665, 1400);
patch(1223, 816, 1073);
seg([1223, 816], [1223, 1073], '#ff9a00', 1.5);
col(B, 11, 597, 1100);
seg([1805, 708], [1937, 632], M, 1);
seg([1805, 708], [1805, 778], M, 1);
col(G, 12, 879, 1300);
col(M, 10, 899, 1300);
seg([1673, 1007], [1750, 964], M, 1);
seg([1673, 1007], [1673, 1085], M, 1);
col(B, 11, 727, 1300);
patch(1753, 1055, 1075);
seg([1753, 1053], [1753, 1075], M, 1);
patch(1620.6, 644, 973);
seg([1620.6, 642], [1620.6, 976], C, 1);
col(Y, 5, 996, 1500);
col(Y, 4, 918, 1500);
col(M, 2, 940, 1691);
col(B, 5, 1063, 1500, { thin: ['al'] });
col(B, 4, 1085, 1691, { thin: ['lv'] });
patch(826, 1165, 1612);
seg([826, 1163], [826, 1300], M, 1);
seg([826, 1300], [826, 1614], B, 1);
col(G, 8, 958, 1350);
col(C, 10, 1075, 1400);
col(G, 9, 1050, 1500, { thin: ['al'] });
col(M, 6, 1197, 1700);
col(B, 8, 1135, 1800, { centerDash: '6 6' });
col(R, 5, 1342, 1921, { thin: ['ar'] });
col(C, 7, 1510, 1900, { thin: ['al', 'ar'] });
col(G, 8, 1616, 2000);
col(Y, 6, 1378, 1998);
col(G, 14, 974, 1537);
col(G, 13, 1135, 1614);
col(M, 12, 1120, 1691);
col(R, 11, 1092, 1768);
col(M, 10, 1118, 1844);
patch(1620.6, 1219, 1692);
seg([1620.6, 1217], [1620.6, 1693], B, 1.5, '3 6');
seg([1620.6, 1693], [1620.6, 1845], G, THICK);
</script>

<style scoped>
.window {
  position: relative;
  width: 3360px;
  height: 2100px;
  margin: 100px;
  background: #000;
  box-shadow: 0 12px 90px rgba(0, 0, 0, 0.38);
  display: flex;
  flex-direction: column;
  font-family: Roboto, "Noto Sans", sans-serif;
  overflow: hidden;
}
.grow {
  flex: 1;
}

/* mac menu bar */
.menubar {
  height: 50px;
  flex: none;
  box-sizing: border-box;
  padding-bottom: 2px;
  display: flex;
  align-items: center;
  padding-left: 38px;
  font-family: Inter, "Liberation Sans", sans-serif;
  font-size: 26px;
  color: #f0f0f0;
}
.apple {
  margin-right: 38px;
}
.app-name {
  font-weight: 700;
  color: #fff;
  margin-right: 43px;
}
.menu-item {
  margin-right: 40px;
}
.tray {
  margin-left: auto;
  display: flex;
  align-items: center;
  gap: 36px;
  padding-right: 37px;
}
.bt {
  margin-left: 8px;
}
.clock {
  font-size: 27px;
  margin-left: -3px;
}

/* window frame */
.app {
  flex: 1;
  min-height: 0;
  display: flex;
  flex-direction: column;
  background: #3b4757;
  border-radius: 18px;
  overflow: hidden;
  box-shadow: inset 0 2px 0 #8f959c;
}
.titlebar {
  height: 112px;
  flex: none;
  display: flex;
  flex-direction: column;
  border-bottom: 2px solid #222933;
  box-sizing: content-box;
}
.title-top {
  position: relative;
  height: 44px;
  flex: none;
  display: flex;
  justify-content: center;
  align-items: center;
  padding-top: 10px;
}
.lights {
  position: absolute;
  left: 16px;
  top: 16px;
  display: flex;
  gap: 16px;
}
.light {
  width: 24px;
  height: 24px;
  border-radius: 50%;
  display: flex;
  align-items: center;
  justify-content: center;
}
.light b {
  width: 9px;
  height: 9px;
  border-radius: 50%;
  background: #7c0d0a;
}
.red {
  background: #ff5f57;
}
.yellow {
  background: #ffbd2e;
}
.green {
  background: #28c840;
}
.title {
  display: flex;
  align-items: center;
  gap: 10px;
  font-family: Inter, "Liberation Sans", sans-serif;
  font-weight: 600;
  font-size: 26.5px;
  color: #a9adb4;
}
.title-file {
  margin-left: 14px;
}
.user {
  position: absolute;
  right: 0;
  top: 2px;
  width: 238px;
  height: 42px;
  box-sizing: border-box;
  border-bottom: 2px solid #2a3240;
  border-left: 2px solid #2a3240;
  background: #4c5a70;
  display: flex;
  align-items: center;
  gap: 10px;
  padding-left: 12px;
  font-size: 24px;
  color: #e4e6e8;
}
.user .caret {
  margin-left: 0;
}
.tools {
  display: flex;
  gap: 106px;
  padding: 8px 0 0 581px;
}
.tool-group {
  position: relative;
  display: flex;
  gap: 32px;
}

.caret {
  width: 0;
  height: 0;
  border-left: 6px solid transparent;
  border-right: 6px solid transparent;
  border-top: 10px solid #d4d6da;
  margin-left: auto;
  flex: none;
}
.caret.small {
  margin-left: 2px;
}

/* body */
.body {
  flex: 1;
  min-height: 0;
  display: flex;
}
.left {
  width: 2507px;
  flex: none;
  display: flex;
  flex-direction: column;
}
.docbar {
  height: 44px;
  flex: none;
  display: flex;
  background: #3b4757;
}
.doc-btn {
  display: flex;
  align-items: center;
  justify-content: center;
  border-right: 2px solid #2a3240;
  box-sizing: border-box;
}
.doc-btn.first {
  width: 49px;
}
.doc-btn.plus {
  width: 46px;
}
.doc-tab {
  width: 259px;
  box-sizing: border-box;
  border-right: 2px solid #2a3240;
  display: flex;
  align-items: center;
  padding-left: 7px;
  font-size: 25px;
  color: #a0a5ab;
}
.doc-tab.active {
  width: 258px;
  background: #4c5a70;
  color: #f2f3f4;
  font-weight: 500;
  font-size: 24px;
}
.viewport {
  position: relative;
  flex: 1;
  min-height: 0;
  background: #21272f;
  overflow: hidden;
}
.scene {
  position: absolute;
  inset: 0;
  width: 100%;
  height: 100%;
}
.axis {
  font-family: Roboto, sans-serif;
  font-weight: 100;
  font-size: 34px;
}
.axis.small {
  font-size: 22px;
}
.vp-label {
  position: absolute;
  left: 32px;
  top: 12px;
  display: flex;
  align-items: center;
  font-size: 24px;
  color: #9da2a8;
  letter-spacing: 0.6px;
}
.vp-plus {
  width: 38px;
}
.vp-item {
  border-left: 2px solid #9da2a8;
  padding-left: 12px;
  margin-right: 15px;
  line-height: 26px;
}
.cube {
  position: absolute;
  left: 2120px;
  top: 32px;
}
.compass {
  font-family: "Open Sans", sans-serif;
  font-weight: 700;
  font-size: 32px;
  fill: #a6a9ac;
}
.face {
  font-family: "Open Sans", sans-serif;
  font-weight: 700;
  font-size: 19px;
  fill: #5b6068;
}
.wcs {
  position: absolute;
  left: 2294px;
  top: 342px;
  width: 100px;
  height: 24px;
  border-radius: 8px;
  background: #6a747e;
  color: #22282f;
  font-family: "Liberation Sans", sans-serif;
  font-size: 21px;
  display: flex;
  align-items: center;
  padding-left: 9px;
  box-sizing: border-box;
  gap: 14px;
}
.wcs-caret {
  width: 0;
  height: 0;
  border-left: 9px solid transparent;
  border-right: 9px solid transparent;
  border-top: 11px solid #a5c2cc;
}
.cmdline {
  position: absolute;
  left: 524px;
  bottom: 0;
  width: 1457px;
  height: 50px;
  box-sizing: border-box;
  background: #3b4757;
  border-bottom: 2px solid #2a3240;
  display: flex;
  align-items: center;
  padding: 0 20px 0 18px;
  color: #a5a9ae;
}
.prompt {
  font-size: 24px;
  width: 75px;
  flex: none;
}
.tiny-caret {
  display: inline-block;
  border-left: 4px solid transparent;
  border-right: 4px solid transparent;
  border-top: 8px solid #b8bbbf;
  vertical-align: 5px;
}
.cmd-hint {
  font-size: 23.5px;
  font-style: italic;
  padding-top: 2px;
}
.up-caret {
  margin-left: auto;
  margin-right: 16px;
  border-left: 5px solid transparent;
  border-right: 5px solid transparent;
  border-bottom: 9px solid #aeb1b5;
}

/* right palette */
.panel {
  flex: 1;
  min-width: 0;
  background: #3a4555;
  display: flex;
  flex-direction: column;
  font-size: 22.5px;
  color: #e8eaec;
}
.panel-tabs {
  height: 45px;
  flex: none;
  display: flex;
  background: #2d3442;
}
.ptab {
  position: relative;
  width: 105px;
  flex: none;
  box-sizing: border-box;
  border-right: 2px solid #252b36;
  display: flex;
  align-items: center;
  justify-content: center;
}
.ptab.active {
  width: 103px;
  background: #3a4555;
}
.ptab-fill {
  flex: 1;
}
.ptab-more {
  width: 49px;
  border-left: 2px solid #252b36;
  background: #333b4a;
  box-sizing: border-box;
  display: flex;
  align-items: center;
  justify-content: center;
  font-size: 24px;
  color: #8d939b;
}
.badge {
  position: absolute;
  right: 27px;
  top: -1px;
  width: 19px;
  height: 19px;
  border-radius: 50%;
  background: #ff7a34;
}
.tool-badge {
  right: -9px;
  top: -5px;
}
.layers-head {
  height: 66px;
  flex: none;
  display: flex;
  padding-left: 21px;
}
.panel-title {
  font-size: 26px;
  color: #f2f3f4;
  line-height: 34px;
}
.layers-head .panel-title {
  margin-top: 1px;
}
.layers-tools {
  display: flex;
  gap: 16px;
  margin: 11px 0 0 127px;
}
.dock {
  margin: 1px 21px 0 auto;
}
.combo {
  flex: none;
  box-sizing: border-box;
  display: flex;
  align-items: center;
  background: #4c5a70;
  border: 2px solid #2e3c42;
  border-radius: 4px;
}
.layer-combo {
  height: 52px;
  margin: 0 15px 0 20px;
  padding: 0 12px 0 20px;
}
.layer-combo .dot {
  width: 16px;
  height: 16px;
  border-radius: 50%;
  background: #e8e8e8;
  margin-right: 16px;
}
.layer-combo svg {
  margin-right: 14px;
}
.combo-text {
  margin-left: 24px;
}
.state-combo {
  height: 51px;
  margin: 5px 16px 0 21px;
  padding: 0 12px 0 12px;
  font-size: 23.5px;
}
.swatch {
  display: block;
  width: 18px;
  height: 20px;
  box-sizing: border-box;
  background: #fff;
  border: 3px solid #000;
  flex: none;
}
.swatch.magenta {
  background: #ff33ff;
}
.hide-row {
  height: 57px;
  flex: none;
  box-sizing: border-box;
  padding-bottom: 3px;
  display: flex;
  align-items: center;
  padding-left: 26px;
  gap: 24px;
  color: #b9bdc3;
  font-size: 23.5px;
}
.layer-table {
  height: 525px;
  flex: none;
  margin: 0 20px 0 21px;
  display: flex;
  flex-direction: column;
  background: #333d4b;
}
.thead {
  height: 46px;
  flex: none;
  display: flex;
  background: #2e3744;
  border-bottom: 2px solid #2a3240;
}
.th {
  display: flex;
  align-items: center;
  justify-content: center;
  box-sizing: border-box;
  border-right: 1px solid #28303c;
}
.c-status {
  width: 55px;
}
.c-frz {
  width: 45px;
}
.c-lock {
  width: 44px;
}
.c-name {
  width: 376px;
}
.c-lw {
  width: 136px;
}
.c-lt {
  width: 93px;
}
.c-pr {
  width: 44px;
}
.c-end {
  flex: 1;
}
.th.c-name {
  position: relative;
  justify-content: flex-start;
  padding-left: 8px;
  background: #4c5a70;
  gap: 13px;
  color: #cfd2d6;
}
.th.c-name b {
  font-weight: 700;
}
.sort {
  position: absolute;
  right: 12px;
  top: 14px;
  display: flex;
  flex-direction: column;
  gap: 4px;
}
.sort i {
  border-left: 5px solid transparent;
  border-right: 5px solid transparent;
  border-bottom: 7px solid #c4c8cd;
}
.sort i.down {
  border-bottom: none;
  border-top: 7px solid #c4c8cd;
}
.sort-mark {
  position: absolute;
  left: 179px;
  bottom: 0;
  border-left: 6px solid transparent;
  border-right: 6px solid transparent;
  border-bottom: 10px solid #3a8ee6;
}
.tbody {
  flex: 1;
  min-height: 0;
  background: #4c5a70;
  border-bottom: 2px solid #252b36;
}
.tr {
  height: 38px;
  display: flex;
  align-items: center;
  color: #eceef0;
}
.tr.sel {
  background: #8d9fb3;
  margin-left: 2px;
}
.td {
  display: flex;
  align-items: center;
  justify-content: center;
  height: 100%;
  box-sizing: border-box;
}
.tr.sel .c-status {
  width: 53px;
}
.td.c-name {
  justify-content: flex-start;
  gap: 15px;
}
.tr .swatch {
  margin-left: -1px;
}
.td.c-lw {
  justify-content: flex-start;
  padding-left: 14px;
}
.td.c-lt {
  justify-content: flex-start;
  padding-left: 14px;
}
.lt-line {
  display: block;
  width: 64px;
  height: 2px;
  background: #f2f3f4;
  flex: none;
}
.hscroll {
  height: 31px;
  flex: none;
  display: flex;
  align-items: center;
  padding: 0 42px 0 7px;
  border: 1px solid #333b49;
  border-top: none;
  box-sizing: border-box;
}
.hscroll i {
  display: block;
  flex: 1;
  height: 10px;
  border-radius: 5px;
  background: #888f98;
}
.layer-actions {
  height: 51px;
  flex: none;
  display: flex;
  align-items: center;
  gap: 26px;
  padding: 0 24px 0 33px;
}
.minus {
  width: 16px;
  height: 4px;
  background: #7e848c;
  margin-right: 14px;
}
.layer-actions .caret.small {
  margin-left: -24px;
}
.search {
  height: 40px;
  flex: none;
  box-sizing: border-box;
  margin: 0 22px 0 22px;
  display: flex;
  align-items: center;
  background: #fff;
  border-radius: 8px;
  padding-left: 8px;
  gap: 6px;
  font-size: 27px;
  color: #bdbdbd;
}
.divider {
  height: 2px;
  flex: none;
  margin-top: 18px;
  background: #252b36;
}
.props-head {
  height: 47px;
  flex: none;
  display: flex;
  align-items: flex-start;
  padding: 0 18px 0 21px;
}
.props-head .panel-title {
  font-size: 25px;
  line-height: 30px;
}
.seg {
  display: flex;
  width: 118px;
  height: 28px;
  margin: 1px 20px 0 0;
  box-sizing: border-box;
  border: 2px solid #2a3240;
  border-radius: 3px;
  font-size: 17px;
  line-height: 24px;
  text-align: center;
  overflow: hidden;
}
.report {
  margin-right: 21px;
}
.seg-all {
  flex: 1;
  color: #8a9098;
  background: #39404d;
}
.seg-my {
  flex: 1;
  color: #f0f1f2;
  background: #4c5a70;
}
.space-combo {
  height: 41px;
  flex: none;
  margin: 0 22px 0 21px;
  box-sizing: border-box;
  display: flex;
  align-items: center;
  padding: 0 12px;
  background: #414d5e;
  border-radius: 3px;
  color: #7f8791;
}
.space-combo .caret {
  border-top-color: #6b7583;
}
.prop-list {
  margin-top: 14px;
}
.prop {
  display: grid;
  grid-template-columns: 391px 415px;
  column-gap: 19px;
  height: 37px;
  margin-bottom: 9px;
}
.prop label {
  text-align: right;
  line-height: 36px;
  font-size: 23.5px;
  color: #c3c6ca;
}
.prop-val {
  box-sizing: border-box;
  display: flex;
  align-items: center;
  background: #4c5a70;
  border: 2px solid #2e3c42;
  border-radius: 4px;
  padding: 0 14px 0 12px;
  color: #f0f1f2;
}
.prop-val .caret {
  border-left-width: 6px;
  border-right-width: 6px;
  border-top-width: 11px;
}
.prop-val.pick .inputbox {
  padding-left: 6px;
}
.prop-val.input {
  padding-left: 5px;
}
.prop-val.color {
  padding-left: 18px;
}
.indent {
  margin-left: 20px;
}
.indent.wide {
  margin-left: 26px;
}
.prop-val.linetype {
  padding-left: 13px;
}
.prop-val.transp,
.prop-val.pick {
  background: none;
  border: none;
  padding: 0;
  gap: 5px;
}
.slider {
  position: relative;
  width: 326px;
  height: 35px;
  margin-left: 6px;
  box-sizing: border-box;
  background: #4c5a70;
  border: 2px solid #2e3c42;
  border-radius: 3px;
  display: flex;
  align-items: center;
  justify-content: flex-end;
  padding-right: 4px;
  flex: none;
}
.thumb {
  position: absolute;
  left: -1px;
  top: 1px;
  width: 3px;
  height: 28px;
  background: #4a97ea;
}
.tick {
  position: absolute;
  left: 158px;
  bottom: 2px;
  width: 1px;
  height: 12px;
  background: #8d97a6;
}
.side-btn {
  width: 75px;
  height: 35px;
  margin-left: 3px;
  box-sizing: border-box;
  background: #4c5a70;
  border: 2px solid #2e3c42;
  border-radius: 3px;
  display: flex;
  align-items: center;
  padding: 0 8px 0 12px;
  gap: 8px;
  flex: none;
}
.inputbox {
  width: 371px;
  height: 35px;
  box-sizing: border-box;
  background: #4c5a70;
  border: 2px solid #2e3c42;
  border-radius: 3px;
  display: flex;
  align-items: center;
  flex: none;
}
.prop-val.off {
  background: #414d5e;
  border-color: #3d4858;
  color: #7f8791;
  padding-left: 5px;
}

/* status bar */
.statusbar {
  height: 48px;
  flex: none;
  box-sizing: border-box;
  display: flex;
  align-items: stretch;
  border-top: 2px solid #252b36;
  border-bottom: 2px solid #2a3240;
  background: #3b4757;
  font-size: 21px;
  color: #a9adb3;
}
.stab {
  width: 118px;
  box-sizing: border-box;
  border-right: 1px solid #2a3240;
  display: flex;
  align-items: center;
  justify-content: center;
}
.stab.model {
  width: 120px;
  background: #4c5a70;
  color: #f2f3f4;
  font-weight: 500;
  border-right: 2px solid #2a3240;
}
.stab.add {
  width: 46px;
}
.coords {
  width: 248px;
  box-sizing: border-box;
  padding-left: 14px;
  border-left: 2px solid #2a3240;
  font-size: 24px;
  display: flex;
  align-items: center;
  white-space: nowrap;
  color: #b0b4b9;
}
.status-icons {
  display: flex;
  align-items: center;
  gap: 4px;
  padding-right: 10px;
}
.sico {
  width: 40px;
  height: 40px;
  display: flex;
}
.sico.on {
  background: #5f90c4;
}
.sico.last {
  margin-left: 4px;
}
.anno {
  font-size: 23px;
  margin-left: -3px;
  color: #a9adb3;
}
.statusbar .caret {
  margin-left: 6px;
}
</style>

<style>
html,
body {
  margin: 0;
  background: #fff;
}
</style>
